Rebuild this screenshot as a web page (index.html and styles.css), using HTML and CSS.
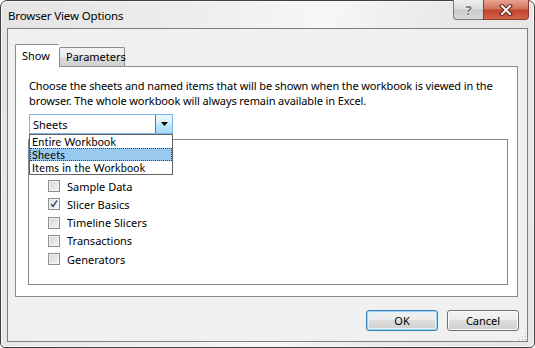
FILE: index.html
```html
<!DOCTYPE html>
<html>
<head>
<meta charset="utf-8">
<link rel="stylesheet" href="styles.css">
</head>
<body>
<div class="window">
  <div class="titlebar">
    <span class="title">Browser View Options</span>
    <div class="caption-btns">
      <div class="cap help">?</div>
      <div class="cap close">
        <svg width="14" height="12" viewBox="0 0 14 12"><path d="M3 2 L11 10 M11 2 L3 10" stroke="#5a1f14" stroke-width="4" stroke-linecap="square" fill="none"/><path d="M3 2 L11 10 M11 2 L3 10" stroke="#ffffff" stroke-width="2" stroke-linecap="square" fill="none"/></svg>
      </div>
    </div>
  </div>
  <div class="client">
    <div class="tabs">
      <div class="tab active">Show</div>
      <div class="tab">Parameters</div>
    </div>
    <div class="pane">
      <p class="desc"><span>Choose the sheets and named items that will be shown when the workbook is viewed in the</span><span>browser. The whole workbook will always remain available in Excel.</span></p>
      <div class="combo-wrap">
        <div class="combo">
          <span class="combo-text">Sheets</span>
          <div class="combo-btn"><svg width="7" height="4" viewBox="0 0 7 4"><path d="M0 0 H7 L3.5 4 Z" fill="#000"/></svg></div>
        </div>
        <ul class="dropdown">
          <li>Entire Workbook</li>
          <li class="sel">Sheets</li>
          <li>Items in the Workbook</li>
        </ul>
      </div>
      <div class="listbox">
        <div class="item"><span class="cb"></span>Sample Data</div>
        <div class="item"><span class="cb checked"><svg width="8" height="8" viewBox="0 0 8 8"><path d="M1 4 L3 6.5 L7 0.5" stroke="#3f4f78" stroke-width="1.4" fill="none"/></svg></span>Slicer Basics</div>
        <div class="item"><span class="cb"></span>Timeline Slicers</div>
        <div class="item"><span class="cb"></span>Transactions</div>
        <div class="item"><span class="cb"></span>Generators</div>
      </div>
    </div>
    <div class="buttons">
      <button class="btn default">OK</button>
      <button class="btn">Cancel</button>
    </div>
    <div class="grip"></div>
  </div>
</div>
</body>
</html>
```
FILE: styles.css
```css
* { box-sizing: border-box; }
html, body { margin: 0; padding: 0; background: #fff; }
body { font-family: "Noto Sans", "Open Sans", sans-serif; font-size: 11px; color: #000; }

.window {
  width: 535px; height: 348px;
  border: 1px solid #3f3f3f;
  border-radius: 7px 7px 5px 5px;
  background: linear-gradient(100deg, #e4e4e4 0%, #eeeeee 35%, #f7f7f7 55%, #e9e9e9 75%, #e6e6e6 100%);
  padding: 0 6px 5px 6px;
  display: flex; flex-direction: column;
  box-shadow: inset 0 0 0 1px #f8f8f8;
}

.titlebar {
  height: 27px;
  display: flex; align-items: flex-start;
}
.title { padding: 7px 0 0 1px; font-size: 11.5px; color: #000; letter-spacing: -0.15px; }
.caption-btns { margin-left: auto; display: flex; margin-top: -1px; margin-right: -1px; }
.cap {
  height: 20px;
  display: flex; align-items: center; justify-content: center;
  border: 1px solid #7a7a7a;
  border-top: none;
}
.help {
  width: 30px;
  border-radius: 0 0 0 4px;
  background: linear-gradient(#eeeeee, #dcdcdc 45%, #c9c9c9 55%, #d8d8d8);
  color: #6f6f6f; font-weight: bold; font-size: 13px; line-height: 18px;
  text-shadow: 0 0 1px #fff, 0 0 2px #fff;
  border-right: none;
}
.close {
  width: 46px;
  border-radius: 0 0 4px 0;
  border-color: #8d3b2c;
  background: linear-gradient(#e9a393, #d4735f 45%, #c1452c 55%, #d2654b);
}

.client {
  flex: 1;
  border: 1px solid #7f7f7f;
  background: #f0f0f0;
  padding: 15px 8px 0 7px;
  display: flex; flex-direction: column;
  position: relative;
}

.tabs { display: flex; align-items: flex-end; height: 22px; position: relative; z-index: 1; }
.tab {
  border: 1px solid #898c95;
  border-bottom: none;
  padding: 0 6px;
  height: 19px;
  line-height: 18px;
  background: linear-gradient(#f2f2f2, #ebebeb 50%, #dddddd 50%, #cfcfcf);
  border-radius: 2px 2px 0 0;
}
.tab.active {
  height: 23px;
  margin-bottom: -1px;
  background: #fff;
  padding: 0 6px 0 6px;
  line-height: 21px;
  width: 44px;
  border-right: none;
}
.tab:not(.active) { width: 66px; padding-left: 6px; }

.pane {
  background: #fff;
  border: 1px solid #898c95;
  height: 231px;
  margin-right: 1px;
  padding: 12px 9px 0 12px;
}
.desc { margin: 0 0 0 1px; line-height: 14.5px; letter-spacing: -0.1px; }
.desc span { display: block; white-space: nowrap; }

.combo-wrap { position: relative; width: 144px; margin: 6px 0 0 1px; }
.combo {
  height: 20px;
  border: 1px solid #7eb4ea;
  background: #fff;
  display: flex; align-items: center;
  padding-left: 3px;
}
.combo-text { flex: 1; }
.combo-btn {
  width: 17px; height: 18px;
  border-left: 1px solid #3c7fb1;
  background: linear-gradient(#eaf6fd, #d9f0fc 50%, #bee6fd 50%, #a7d9f5);
  display: flex; align-items: center; justify-content: center;
}
.dropdown {
  position: absolute; left: 0; top: 20px;
  width: 144px;
  margin: 0; padding: 0; list-style: none;
  border: 1px solid #646464;
  background: #fff;
  z-index: 2;
  font-family: Lato, "Noto Sans", sans-serif;
  font-size: 10.8px;
  letter-spacing: 0.25px;
}
.dropdown li { height: 13px; line-height: 13px; padding-left: 2px; overflow: hidden; }
.dropdown li.sel { background: #99c9ef; outline: 1px dotted #2b4a6b; outline-offset: -1px; }

.listbox {
  margin-top: 5px;
  height: 146px;
  border: 1px solid #828790;
  background: #fff;
  padding: 37px 0 0 19px;
}
.item { height: 18.25px; display: flex; align-items: center; gap: 7px; }
.cb {
  width: 12px; height: 12px;
  border: 1px solid #8e8f8f;
  background: linear-gradient(135deg, #d3d5d9, #f4f4f5);
  box-shadow: inset 0 0 0 1px #f3f3f3;
  display: flex; align-items: center; justify-content: center;
}
.cb.checked { background: linear-gradient(135deg, #e0e2e6, #f7f7f8); }

.buttons { display: flex; justify-content: flex-end; gap: 9px; margin-top: 13px; }
.btn {
  width: 72px; height: 21px;
  font-family: inherit; font-size: 11px; color: #000;
  border: 1px solid #707070;
  border-radius: 3px;
  background: linear-gradient(#f2f2f2, #ebebeb 50%, #dddddd 50%, #cfcfcf);
  box-shadow: inset 0 0 0 1px #fcfcfc;
  padding: 0;
}
.btn.default {
  border-color: #3c7fb1;
  box-shadow: inset 0 0 0 1px #9ad6f7, inset 0 0 0 2px #e0f3fc;
}

.grip {
  position: absolute; right: 1px; bottom: 1px;
  width: 8px; height: 8px;
  background-image: radial-gradient(circle, #b0b0b0 0.8px, transparent 1px);
  background-size: 3px 3px;
  clip-path: polygon(100% 0, 100% 100%, 0 100%);
}
```
